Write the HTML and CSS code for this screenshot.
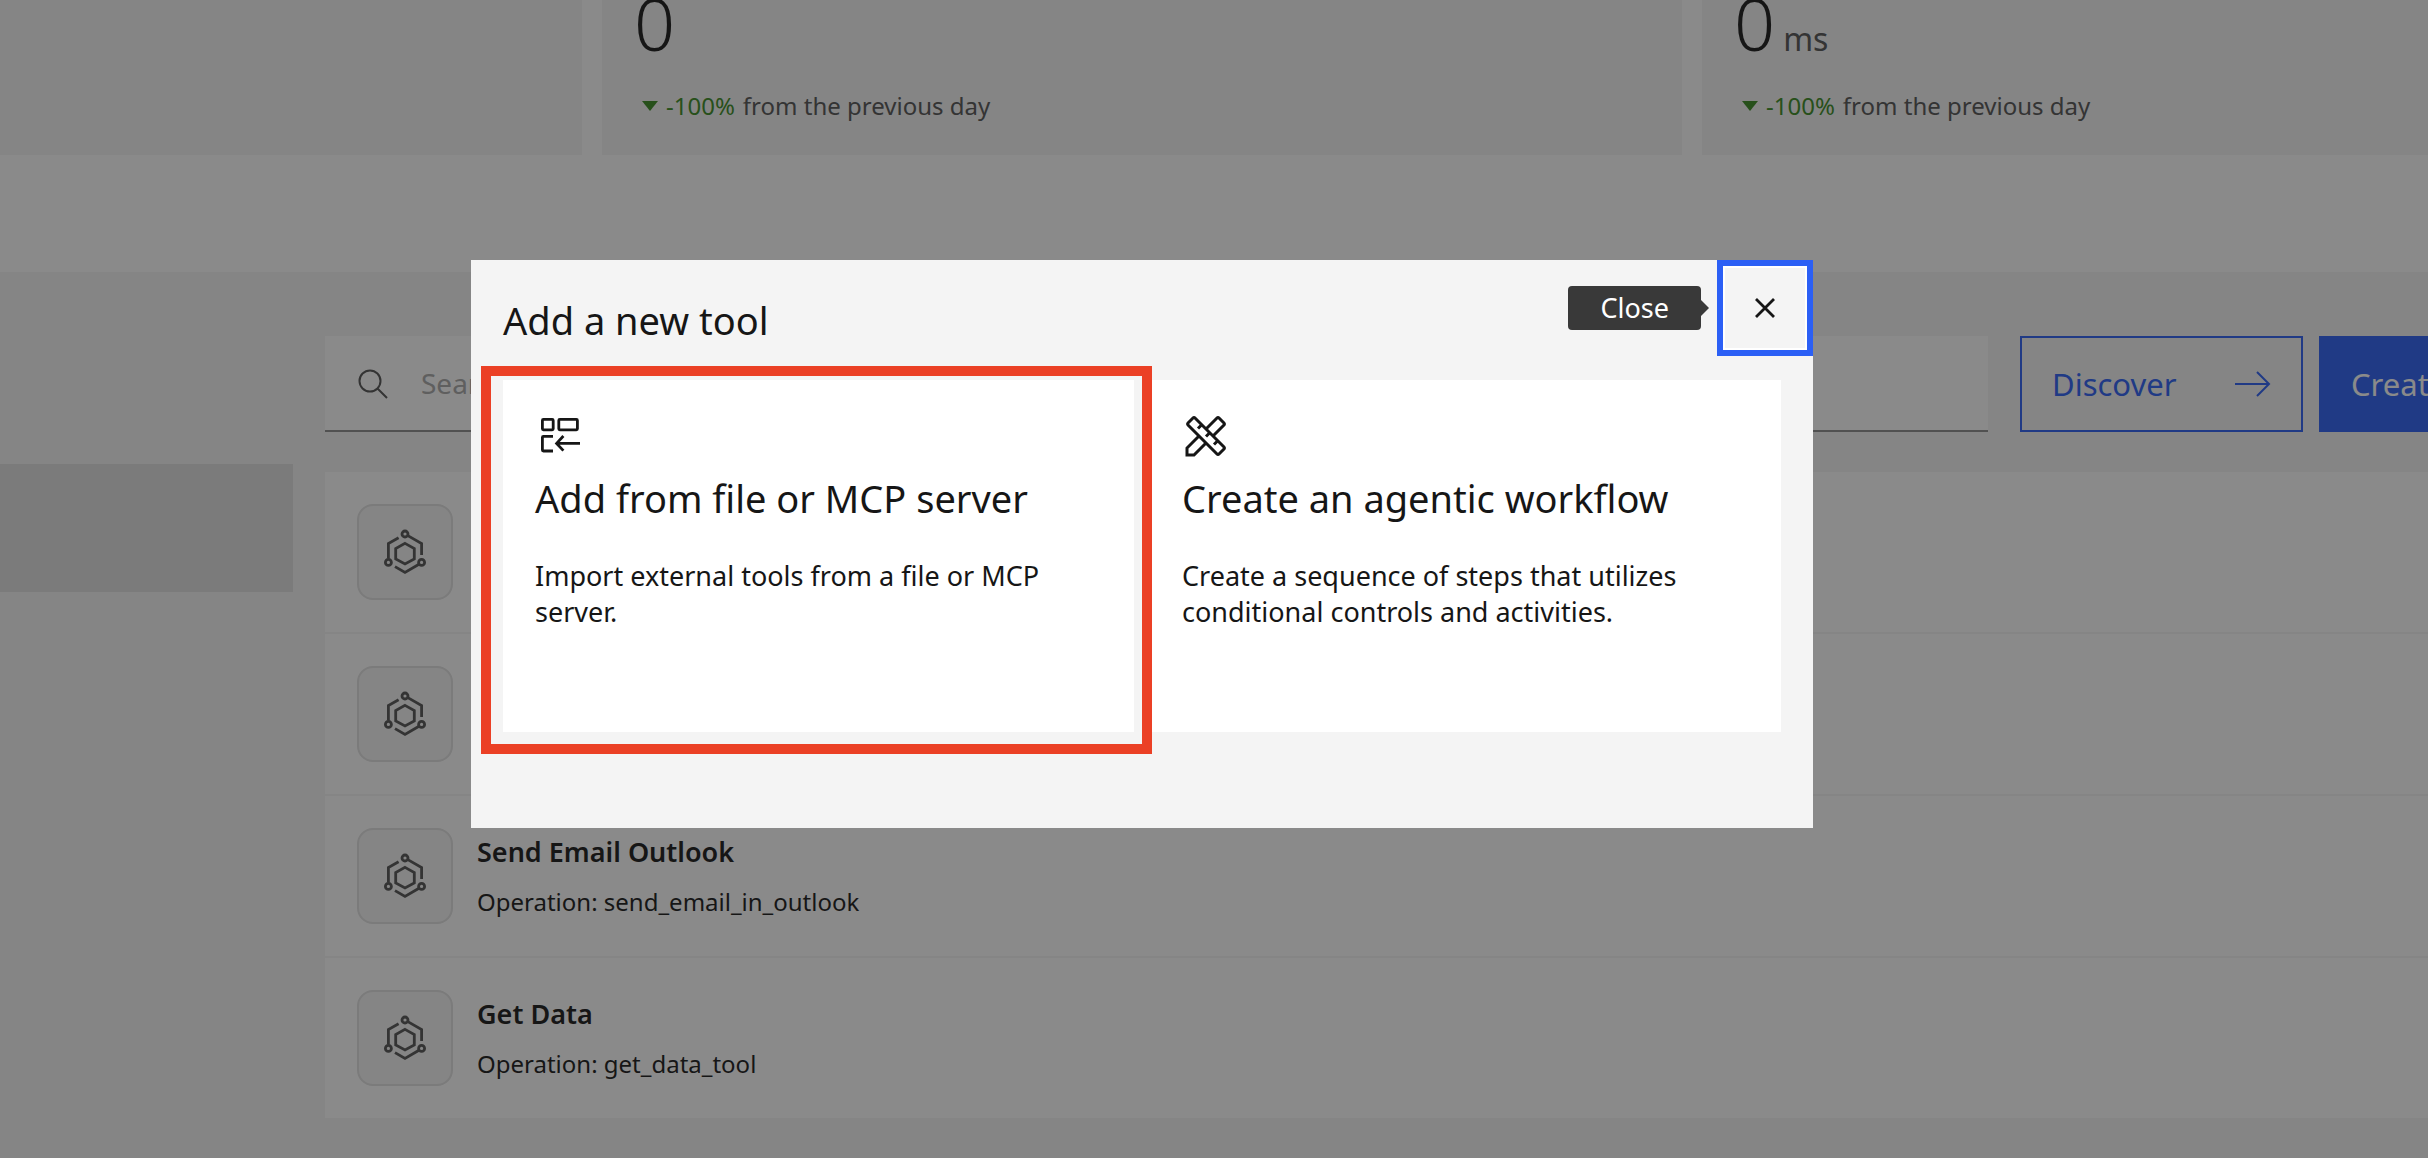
FILE: index.html
```html
<!DOCTYPE html>
<html lang="en">
<head>
<meta charset="utf-8">
<meta name="viewport" content="width=device-width, initial-scale=1">
<title>Add a new tool</title>
<link rel="stylesheet" href="styles.css">
</head>
<body>
<svg class="sprite" aria-hidden="true">
  <symbol id="tool" viewBox="0 0 48 48">
    <g fill="none" stroke="currentColor" stroke-width="2.8">
      <path d="M24 15.4l9.3 5.2v10.4L24 36l-9.3-5V20.6z"/>
      <path d="M7.4 30.600V15.6L17.6 9.800M26.8 7.6L40.600 15.6V27M14 38.6L24 44.4L38 36.2"/>
      <circle cx="24" cy="6" r="3"/>
      <circle cx="7.4" cy="34.4" r="3"/>
      <circle cx="40.6" cy="34.4" r="3"/>
    </g>
  </symbol>
</svg>

<div class="page">
  <section class="stats">
    <article class="stat"></article>
    <article class="stat">
      <p class="stat-value">0</p>
      <p class="trend"><span class="trend-arrow"></span><span class="trend-change">-100%</span> <span>from the previous day</span></p>
    </article>
    <article class="stat">
      <p class="stat-value">0<span class="stat-unit">ms</span></p>
      <p class="trend"><span class="trend-arrow"></span><span class="trend-change">-100%</span> <span>from the previous day</span></p>
    </article>
  </section>

  <section class="tools">
    <nav class="side"><div class="side-current"></div></nav>
    <div class="tools-main">
      <div class="toolbar">
        <label class="search">
          <svg class="search-icon" viewBox="0 0 32 32" aria-hidden="true"><path d="M20.5 21.500L30 31M23.500 14a10.5 10.5 0 1 1-21 0a10.5 10.5 0 0 1 21 0z" fill="none" stroke="currentColor" stroke-width="2"/></svg>
          <input class="search-input" type="search" placeholder="Search" aria-label="Search">
        </label>
        <button class="btn btn-outline" type="button">Discover
          <svg class="btn-arrow" viewBox="0 0 36 28" aria-hidden="true"><path d="M0 14H34M22 2L34 14L22 26" fill="none" stroke="currentColor" stroke-width="2"/></svg>
        </button>
        <button class="btn btn-primary" type="button">Create</button>
      </div>
      <ul class="list">
        <li class="row"><span class="row-icon"><svg><use href="#tool"/></svg></span></li>
        <li class="row"><span class="row-icon"><svg><use href="#tool"/></svg></span></li>
        <li class="row">
          <span class="row-icon"><svg><use href="#tool"/></svg></span>
          <div class="row-text"><h3 class="row-title">Send Email Outlook</h3><p class="row-detail">Operation: send_email_in_outlook</p></div>
        </li>
        <li class="row">
          <span class="row-icon"><svg><use href="#tool"/></svg></span>
          <div class="row-text"><h3 class="row-title">Get Data</h3><p class="row-detail">Operation: get_data_tool</p></div>
        </li>
      </ul>
    </div>
  </section>
</div>

<div class="overlay">
  <div class="modal" role="dialog" aria-modal="true" aria-labelledby="modal-title">
    <header class="modal-head">
      <h2 class="modal-title" id="modal-title">Add a new tool</h2>
      <div class="close-wrap">
        <button class="close" type="button" aria-describedby="close-tip">
          <svg viewBox="0 0 20 20" aria-hidden="true"><path d="M1 1L19 19M19 1L1 19" fill="none" stroke="currentColor" stroke-width="2.8"/></svg>
        </button>
        <span class="tooltip" id="close-tip" role="tooltip">Close</span>
      </div>
    </header>
    <div class="choices">
      <button class="choice choice-marked" type="button">
        <svg class="choice-icon" viewBox="0 0 48 48" aria-hidden="true">
          <g fill="none" stroke="currentColor" stroke-width="2.8">
            <rect x="7.4" y="7.4" width="10.8" height="10.4" rx="1"/>
            <rect x="23.8" y="7.4" width="18.6" height="10.4" rx="1"/>
            <path d="M18 24.4H8.4a1 1 0 0 0-1 1V38a1 1 0 0 0 1 1H18M45 31.4H22M28.4 24L21.6 31.4L28.4 38.6"/>
          </g>
        </svg>
        <span class="choice-title">Add from file or MCP server</span>
        <span class="choice-text">Import external tools from a file or MCP server.</span>
      </button>
      <button class="choice" type="button">
        <svg class="choice-icon" viewBox="0 0 48 48" aria-hidden="true">
          <g fill="none" stroke="currentColor" stroke-width="3">
            <path d="M13 6L42 35a1.4 1.4 0 0 1 0 2L37 42a1.4 1.4 0 0 1-2 0L6 13a1.4 1.4 0 0 1 0-2L11 6a1.4 1.4 0 0 1 2 0z"/>
            <path d="M20 12.500L16 16.500M28 20.500L24 24.500M36 28.500L32 32.500"/>
            <path d="M24 17L35 6a1.4 1.4 0 0 1 2 0L42 11a1.4 1.4 0 0 1 0 2L31 24M17 24L5 36V43H12L24 31"/>
          </g>
        </svg>
        <span class="choice-title">Create an agentic workflow</span>
        <span class="choice-text">Create a sequence of steps that utilizes conditional controls and activities.</span>
      </button>
    </div>
  </div>
</div>
</body>
</html>
```
FILE: styles.css
```css
:root {
  --ink: #161616;
  --muted: #525252;
  --layer: #f4f4f4;
  --line: #e0e0e0;
  --blue: #2b5ff5;
}

* { box-sizing: border-box; }

body {
  margin: 0;
  overflow: hidden;
  background: #fff;
  color: var(--ink);
  font-family: "Noto Sans", sans-serif;
  font-size: 27px;
  line-height: 36px;
}

h2, h3, p, ul { margin: 0; padding: 0; font-size: inherit; font-weight: 400; }
button, input { font: inherit; color: inherit; border: 0; border-radius: 0; }
.sprite { position: absolute; width: 0; height: 0; }

.page { display: flex; flex-direction: column; min-height: 100vh; }

/* statistics, scrolled partly out of view */
.stats {
  display: grid;
  grid-template-columns: 582fr 1080fr 726fr;
  gap: 20px;
  margin-top: -13px;
  padding-bottom: 117px;
}
.stat {
  display: flex;
  flex-direction: column;
  gap: 31px;
  padding: 0 32px 33px;
  background: var(--layer);
}
.stat-value { font-size: 72px; line-height: 72px; font-weight: 300; }
.stat-unit { margin-left: 8px; font-size: 32px; font-weight: 400; color: var(--muted); line-height: 32px; }
.trend {
  display: flex;
  align-items: center;
  gap: 8px;
  padding-left: 8px;
  font-size: 24px;
  line-height: 32px;
  color: var(--muted);
}
.trend-arrow {
  border: 8px solid transparent;
  border-top: 10px solid #388a20;
  border-bottom: 0;
}
.trend-change { color: #388a20; }

/* tools area */
.tools { flex: 1; display: flex; gap: 32px; background: var(--layer); }
.side { flex: none; width: 293px; padding-top: 192px; }
.side-current { height: 128px; background: var(--line); }
.tools-main { flex: 1; min-width: 0; padding: 64px 0 40px; }
.toolbar { display: flex; height: 96px; margin: 0 -80px 40px 0; }
.search {
  flex: 1;
  display: flex;
  align-items: center;
  gap: 32px;
  margin-right: 32px;
  padding-left: 32px;
  background: #fff;
  border-bottom: 2px solid #8d8d8d;
}
.search-icon { width: 32px; height: 32px; color: var(--muted); }
.search-input { flex: 1; min-width: 0; padding: 0; background: none; outline: 0; font-size: 28px; }
.search-input::placeholder { color: #a8a8a8; opacity: 1; }
.btn {
  flex: none;
  display: flex;
  align-items: center;
  justify-content: space-between;
  padding: 0 30px;
  border: 2px solid var(--blue);
  font-size: 31px;
}
.btn-outline { width: 283px; margin-right: 16px; background: none; color: var(--blue); }
.btn-arrow { width: 36px; height: 28px; }
.btn-primary { width: 189px; background: var(--blue); color: #fff; }

.list { list-style: none; background: #fff; }
.row { display: flex; align-items: center; gap: 24px; height: 162px; padding: 0 32px; border-bottom: 2px solid var(--layer); }
.row:last-child { height: 160px; border-bottom: 0; }
.row-icon {
  display: grid;
  place-items: center;
  width: 96px;
  height: 96px;
  border: 2px solid var(--line);
  border-radius: 16px;
  background: var(--layer);
  color: var(--muted);
}
.row-icon svg { width: 48px; height: 48px; }
.row-text { display: grid; gap: 16px; }
.row-title { font-weight: 600; }
.row-detail { font-size: 24px; line-height: 32px; }

/* dialog */
.overlay {
  position: fixed;
  inset: 0;
  display: flex;
  align-items: flex-start;
  padding: 260px 615px 0 471px;
  background: rgba(22, 22, 22, 0.5);
}
.modal { flex: 1; padding-bottom: 96px; background: var(--layer); }
.modal-head { display: flex; justify-content: space-between; height: 120px; padding-left: 32px; }
.modal-title { padding-top: 36px; font-size: 38px; line-height: 48px; }
.close-wrap { position: relative; height: 96px; }
.close {
  display: grid;
  place-items: center;
  width: 96px;
  height: 96px;
  padding: 0;
  background: none;
  border: 6px solid var(--blue);
  box-shadow: inset 0 0 0 2px #fff;
}
.close svg { width: 20px; height: 20px; }
.tooltip {
  position: absolute;
  top: 26px;
  right: 112px;
  padding: 4px 32px;
  border-radius: 4px;
  background: #393939;
  color: #fff;
}
.tooltip::after {
  content: "";
  position: absolute;
  top: 14px;
  left: 100%;
  border: 8px solid transparent;
  border-left-color: #393939;
  border-right: 0;
}
.choices { display: grid; grid-template-columns: 1fr 1fr; gap: 16px; padding: 0 32px; }
.choice {
  position: relative;
  display: flex;
  flex-direction: column;
  align-items: flex-start;
  min-height: 352px;
  padding: 32px;
  background: #fff;
  text-align: left;
}
.choice-icon { width: 48px; height: 48px; margin-bottom: 14px; }
.choice-title { margin-bottom: 36px; font-size: 38px; line-height: 48px; }
.choice-marked { z-index: 1; }
.choice-marked::after {
  content: "";
  position: absolute;
  inset: -14px -18px -22px -22px;
  border: 10px solid #eb4025;
}
```
